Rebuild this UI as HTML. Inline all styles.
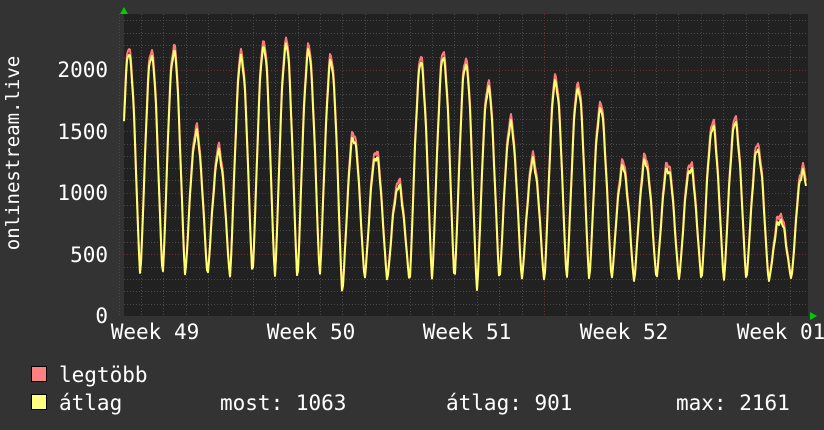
<!DOCTYPE html><html><head><meta charset="utf-8"><style>
body{margin:0;background:#333;width:824px;height:430px;overflow:hidden;font-family:"DejaVu Sans Mono","Liberation Mono",monospace}
svg{display:block}
text{fill:#fff;font-family:"DejaVu Sans Mono","Liberation Mono",monospace;font-size:21px}
</style></head><body>
<svg id="s" width="824" height="430" xmlns="http://www.w3.org/2000/svg">
<rect x="0" y="0" width="824" height="430" fill="#333"/>
<rect x="124" y="14" width="684" height="302" fill="#212121"/>
<g id="grid"></g>
<g id="data"></g>
<polygon points="120,14 128,14 124,7" fill="#0c0"/>
<polygon points="810,312 810,320 817,316" fill="#0c0"/>
<text x="108" y="77" text-anchor="end">2000</text>
<text x="108" y="139" text-anchor="end">1500</text>
<text x="108" y="200" text-anchor="end">1000</text>
<text x="108" y="262" text-anchor="end">500</text>
<text x="108" y="323" text-anchor="end">0</text>
<text x="155" y="339" text-anchor="middle">Week 49</text>
<text x="311" y="339" text-anchor="middle">Week 50</text>
<text x="467" y="339" text-anchor="middle">Week 51</text>
<text x="624" y="339" text-anchor="middle">Week 52</text>
<text x="781" y="339" text-anchor="middle">Week 01</text>
<text transform="translate(19,153) rotate(-90)" text-anchor="middle" style="font-size:19px">onlinestream.live</text>
<rect x="31.5" y="366.5" width="15" height="15" fill="#ff8080" stroke="#000"/>
<rect x="31.5" y="394.5" width="15" height="15" fill="#ffff80" stroke="#000"/>
<text x="59" y="382">legtöbb</text>
<text x="59" y="410">átlag</text>
<text x="220" y="410">most: 1063</text>
<text x="446" y="410">átlag: 901</text>
<text x="676" y="410">max: 2161</text>
</svg>
<script>
var ns="http://www.w3.org/2000/svg",g=document.getElementById('grid'),d=document.getElementById('data');
function ln(x1,y1,x2,y2,c){var l=document.createElementNS(ns,'line');l.setAttribute('x1',x1);l.setAttribute('y1',y1);l.setAttribute('x2',x2);l.setAttribute('y2',y2);l.setAttribute('stroke',c);l.setAttribute('stroke-dasharray','1,2');l.setAttribute('stroke-width','1');g.appendChild(l);}
function Y(v){return 316-v*0.1232;}
for(var v=100;v<=2400;v+=100){var y=Math.round(Y(v))+.5;ln(124,y,808,y,v%500==0?'#6a3030':'#4a4a4a');}
for(var x=230.5-22.4*5;x<808;x+=22.4){var k=Math.round((x-230.5)/22.4);ln(Math.round(x)+.5,14,Math.round(x)+.5,316,(k%7==0)?'#6a3030':'#4a4a4a');}
var peaks=[2130,2120,2150,1480,1320,2100,2190,2200,2140,2060,1450,1300,1050,2050,2100,2050,1850,1550,1250,1900,1850,1680,1200,1250,1200,1200,1530,1560,1350,780,1170];
var mins=[330,330,330,330,320,330,320,290,330,180,300,290,280,300,290,210,290,300,280,300,290,300,280,300,300,290,290,290,280,300,310];
var ya=[],ym=[];
for(var x=124;x<=806;x+=1){
 var t=(x-129)/22.45; var i=Math.round(t); var ph=t-i;
 var ii=Math.max(0,Math.min(30,i));
 var pk=peaks[ii]; var mn=ph<0?mins[Math.max(0,ii-1)]:mins[ii];
 var f=Math.pow(Math.cos(Math.min(Math.abs(ph),0.5)*Math.PI),2);
 f=Math.pow(f,0.65);
 var n=Math.sin(x*1.7)*25+Math.sin(x*0.9)*20;
 var v=mn+(pk-mn)*f+n*f;
 ya.push([x,Y(v)]);ym.push([x,Y(v+40*f+8)]);
}
function path(arr,c){var p=document.createElementNS(ns,'path');p.setAttribute('d','M'+arr.map(function(a){return a[0]+','+a[1].toFixed(1)}).join('L'));p.setAttribute('fill','none');p.setAttribute('stroke',c);p.setAttribute('stroke-width','2');p.setAttribute('stroke-linejoin','round');d.appendChild(p);}
path(ym,'#ff7878');path(ya,'#ffff70');
</script>
</body></html>
